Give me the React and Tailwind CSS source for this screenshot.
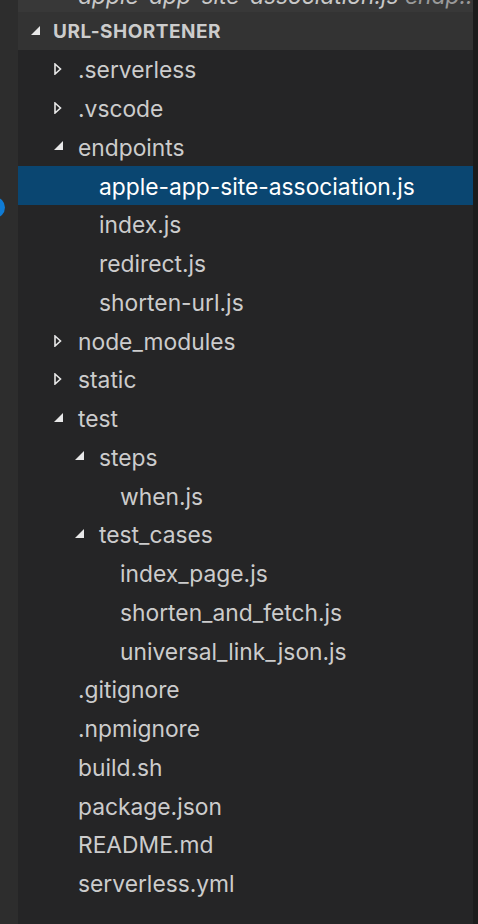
import React from "react";

const rows = [
  { label: ".serverless", depth: 0, kind: "closed" },
  { label: ".vscode", depth: 0, kind: "closed" },
  { label: "endpoints", depth: 0, kind: "open" },
  { label: "apple-app-site-association.js", depth: 1, kind: "file", selected: true },
  { label: "index.js", depth: 1, kind: "file" },
  { label: "redirect.js", depth: 1, kind: "file" },
  { label: "shorten-url.js", depth: 1, kind: "file" },
  { label: "node_modules", depth: 0, kind: "closed" },
  { label: "static", depth: 0, kind: "closed" },
  { label: "test", depth: 0, kind: "open" },
  { label: "steps", depth: 1, kind: "open" },
  { label: "when.js", depth: 2, kind: "file" },
  { label: "test_cases", depth: 1, kind: "open" },
  { label: "index_page.js", depth: 2, kind: "file" },
  { label: "shorten_and_fetch.js", depth: 2, kind: "file" },
  { label: "universal_link_json.js", depth: 2, kind: "file" },
  { label: ".gitignore", depth: 0, kind: "file" },
  { label: ".npmignore", depth: 0, kind: "file" },
  { label: "build.sh", depth: 0, kind: "file" },
  { label: "package.json", depth: 0, kind: "file" },
  { label: "README.md", depth: 0, kind: "file" },
  { label: "serverless.yml", depth: 0, kind: "file" },
];

const indent = { 0: "pl-[36px]", 1: "pl-[57px]", 2: "pl-[78px]" };

function Twistie({ kind }) {
  if (kind === "closed")
    return (
      <svg width="8" height="12" viewBox="0 0 8 12">
        <polygon points="1,1 6.5,6 1,11" fill="none" stroke="#e8e8e8" strokeWidth="1.6" strokeLinejoin="miter" />
      </svg>
    );
  if (kind === "open")
    return (
      <svg width="9" height="9" viewBox="0 0 9 9" className="-mt-[2px]">
        <polygon points="9,0 9,9 0,9" fill="#e8e8e8" />
      </svg>
    );
  return null;
}

function Row({ label, depth, kind, selected }) {
  return (
    <div
      className={`flex items-center h-[38.75px] shrink-0 ${indent[depth]} ${
        selected ? "bg-[#0a4671] text-white" : "text-[#cccccc]"
      }`}
    >
      <div className="w-[24px] flex items-center">
        <Twistie kind={kind} />
      </div>
      <span className="text-[22.8px] leading-none whitespace-nowrap pt-[3px]">{label}</span>
    </div>
  );
}

export default function App() {
  return (
    <div className="relative w-[478px] h-[924px] flex overflow-hidden bg-[#252526] font-['Inter',sans-serif]">
      <div className="w-[18px] shrink-0 bg-[#2d2d2d]" />
      <div className="flex-1 flex flex-col min-w-0">
        <div className="h-[12px] shrink-0 bg-[#383838] overflow-hidden">
          <div className="pl-[60px] -mt-[15px] text-[22.8px] leading-[22px] italic whitespace-nowrap text-[#c8c8c8]">
            apple-app-site-association.js <span className="text-[#9a9a9a]">endp...</span>
          </div>
        </div>
        <div className="h-[38px] shrink-0 bg-[#333333] flex items-center pl-[13px]">
          <div className="w-[22px] flex items-center -mt-[2px]">
            <svg width="9" height="9" viewBox="0 0 9 9">
              <polygon points="9,0 9,9 0,9" fill="#e8e8e8" />
            </svg>
          </div>
          <span className="text-[19px] font-bold tracking-[0.5px] text-[#cccccc] leading-none">URL-SHORTENER</span>
        </div>
        {rows.map((r) => (
          <Row key={r.label + r.depth} {...r} />
        ))}
      </div>
      <div className="w-[5px] shrink-0 bg-[#1c1c1c]" />
      <div className="absolute left-[-16px] top-[197px] w-[21px] h-[21px] rounded-full bg-[#0f7bd4]" />
    </div>
  );
}
